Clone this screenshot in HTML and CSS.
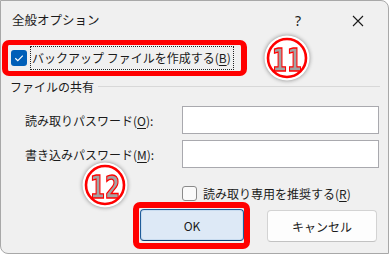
FILE: index.html
```html
<!DOCTYPE html>
<html lang="ja">
<head>
<meta charset="utf-8">
<link rel="stylesheet" href="styles.css">
</head>
<body>
<div class="window">
  <div class="titlebar">
    <span class="title">全般オプション</span>
    <span class="tb-help">?</span>
    <span class="tb-close">
      <svg width="12" height="12" viewBox="0 0 12 12"><path d="M1 1 L11 11 M11 1 L1 11" stroke="#1a1a1a" stroke-width="1.1" fill="none"/></svg>
    </span>
  </div>

  <div class="hl hl-backup">
    <span class="cb cb-checked">
      <svg width="16" height="16" viewBox="0 0 16 16"><path d="M4.3 8.2 L6.8 10.6 L11.8 5.6" stroke="#fff" stroke-width="1.2" fill="none"/></svg>
    </span>
    <span class="focus-label">バックアップ ファイルを作成する(<u>B</u>)</span>
  </div>

  <div class="group-head">
    <span>ファイルの共有</span>
    <span class="group-line"></span>
  </div>

  <div class="field-row">
    <span class="field-label">読み取りパスワード(<u>O</u>):</span>
    <span class="input"></span>
  </div>
  <div class="field-row">
    <span class="field-label">書き込みパスワード(<u>M</u>):</span>
    <span class="input"></span>
  </div>

  <div class="ro-row">
    <span class="cb"></span>
    <span>読み取り専用を推奨する(<u>R</u>)</span>
  </div>

  <div class="btn-row">
    <div class="hl hl-ok">
      <button class="btn btn-default">OK</button>
    </div>
    <button class="btn btn-cancel">キャンセル</button>
  </div>

  <svg class="badge badge-11" width="54" height="54" viewBox="0 0 54 54">
    <circle cx="27" cy="27" r="22.5" fill="#fff"/>
    <circle cx="27" cy="27" r="19" fill="none" stroke="#f00" stroke-width="2.6"/>
    <text x="27" y="39.5" text-anchor="middle" textLength="30" lengthAdjust="spacingAndGlyphs" class="badge-num">11</text>
  </svg>
  <svg class="badge badge-12" width="54" height="54" viewBox="0 0 54 54">
    <circle cx="27" cy="27" r="22.5" fill="#fff"/>
    <circle cx="27" cy="27" r="19" fill="none" stroke="#f00" stroke-width="2.6"/>
    <text x="27" y="39.5" text-anchor="middle" textLength="30" lengthAdjust="spacingAndGlyphs" class="badge-num">12</text>
  </svg>
</div>
</body>
</html>
```

FILE: styles.css
```css
* { box-sizing: border-box; }
html, body { margin: 0; padding: 0; background: #fff; }
body {
  font-family: "Noto Sans CJK JP", "Noto Sans", sans-serif;
  font-size: 12px;
  color: #1b1b1b;
}
u { text-decoration: underline; text-underline-offset: 2px; }

.window {
  position: relative;
  width: 389px;
  height: 254px;
  background: #f0f0f0;
  border: 1px solid #a8a8a8;
  border-radius: 0 8px 0 8px;
  overflow: hidden;
}

.titlebar {
  height: 39px;
  display: flex;
  align-items: center;
  padding-left: 11px;
}
.title { flex: 1; font-size: 12.5px; padding-bottom: 3px; }
.tb-help { width: 20px; text-align: center; font-size: 14px; margin-right: 44px; font-family: "Noto Sans", sans-serif; }
.tb-close { width: 12px; height: 12px; margin-right: 24px; display: flex; }

.hl {
  border: 6px solid #ff0000;
  border-radius: 7px;
}
.hl-backup {
  margin-left: 1px;
  width: 245px;
  height: 36px;
  border-width: 5px 6px 5px 6px;
  display: flex;
  align-items: center;
  padding-left: 3px;
}
.cb {
  width: 15px;
  height: 15px;
  border: 1px solid #8a8a8a;
  border-radius: 3px;
  background: #fafafa;
  display: inline-flex;
  flex: none;
}
.cb-checked {
  width: 16px;
  height: 16px;
  background: #005fb8;
  border: none;
}
.focus-label {
  margin-left: 3px;
  padding: 1px 0 2px 1px;
  border: 1px dotted #222;
  line-height: 19px;
  width: 204px;
  white-space: nowrap;
}

.group-head {
  height: 20px;
  display: flex;
  align-items: center;
  padding-left: 9px;
  padding-right: 8px;
}
.group-line {
  flex: 1;
  height: 1px;
  background: #d8d8d8;
  margin-left: 4px;
}

.field-row {
  display: flex;
  align-items: center;
  padding-left: 24px;
  margin-top: 6px;
}
.group-head + .field-row { margin-top: 10px; }
.field-label { width: 157px; white-space: nowrap; }
.input {
  width: 197px;
  height: 28px;
  background: #fff;
  border: 1px solid #a9a9ae;
}

.ro-row {
  display: flex;
  align-items: center;
  gap: 6px;
  padding-left: 181px;
  height: 17px;
  margin-top: 17px;
  white-space: nowrap;
}

.btn-row {
  display: flex;
  align-items: flex-start;
  padding-left: 132px;
  margin-top: 0px;
}
.hl-ok {
  width: 117px;
  height: 47px;
  padding: 1px 0 0 1px;
}
.btn {
  font-family: "Noto Sans CJK JP", "Noto Sans", sans-serif;
  font-size: 12px;
  color: #1b1b1b;
  height: 32px;
  border-radius: 4px;
  padding: 0;
}
.btn-default {
  width: 104px;
  background: #dde9f6;
  border: 1px solid #1f5c99;
  border-bottom-color: #0d3f73;
  box-shadow: inset 0 0 0 1px #c8dcf0;
}
.btn-cancel {
  margin-left: 17px;
  margin-top: 8px;
  width: 110px;
  height: 32px;
  background: #fdfdfd;
  border: 1px solid #d3d3d3;
  border-bottom-color: #c2c2c2;
}

.badge {
  position: absolute;
  filter: drop-shadow(0 0 2px rgba(0,0,0,0.45));
}
.badge-11 { left: 259px; top: 30px; }
.badge-12 { left: 77px; top: 157px; }
.badge-num {
  font-family: "DejaVu Sans Condensed", "DejaVu Sans", sans-serif;
  font-weight: bold;
  font-size: 32px;
  fill: #a3a3a3;
  stroke: #ff0000;
  stroke-width: 1.4px;
}
```
